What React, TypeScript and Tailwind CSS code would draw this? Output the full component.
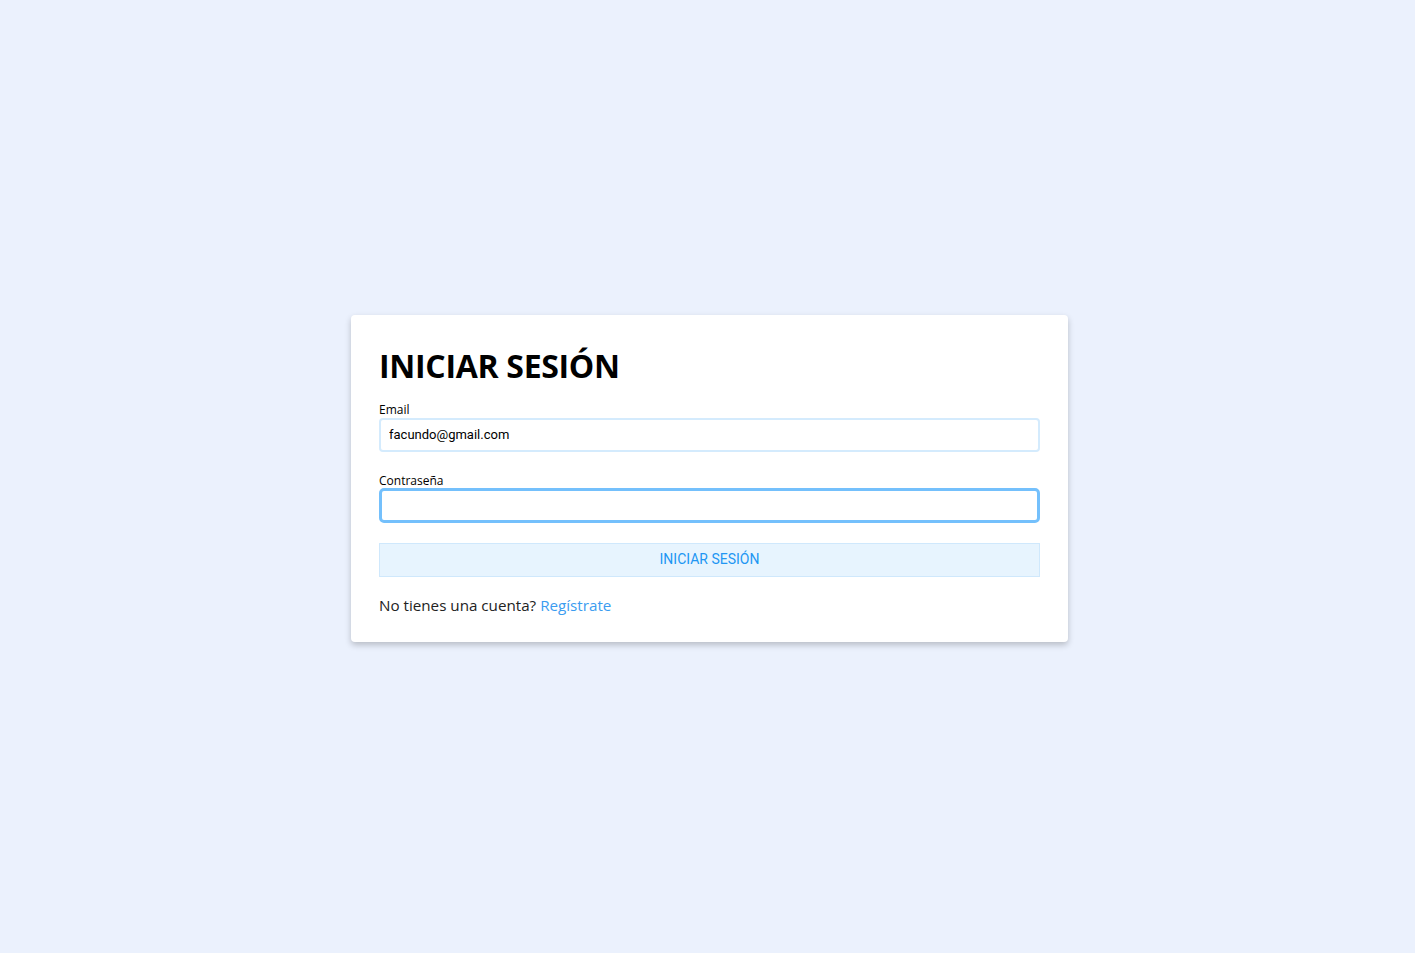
import React, { useState } from 'react';

export default function App() {
  const [email, setEmail] = useState('facundo@gmail.com');
  const [password, setPassword] = useState('');

  return (
    <div className="min-h-screen w-full flex items-center justify-center bg-[#ebf1fd]">
      <div className="ml-[4px] mt-[3px] w-[717px] bg-white rounded-[4px] shadow-[0_3px_6px_rgba(0,0,0,0.22)] px-[28px] pt-[31px] pb-[25px]">
        <h1 className="text-[32px] leading-[40px] font-bold text-black mb-[17px] font-['Open_Sans',sans-serif] tracking-[-0.3px]">
          INICIAR SESIÓN
        </h1>

        <label className="block text-[12px] leading-[14px] text-black font-['Open_Sans',sans-serif] mb-[1px]">
          Email
        </label>
        <input
          type="text"
          value={email}
          onChange={(e) => setEmail(e.target.value)}
          className="w-full h-[34px] px-[8px] border-2 border-[#d4ebfd] rounded-[4px] text-[13px] text-black font-['Roboto',sans-serif] outline-none"
        />

        <label className="block mt-[22px] text-[12px] leading-[14px] text-black font-['Open_Sans',sans-serif]">
          Contraseña
        </label>
        <input
          type="password"
          value={password}
          onChange={(e) => setPassword(e.target.value)}
          className="w-full h-[35px] px-[8px] border-[3px] border-[#74c0fc] rounded-[5px] text-[13px] text-black font-['Roboto',sans-serif] outline-none"
        />

        <button className="mt-[20px] w-full h-[34px] bg-[#e7f4fe] border border-[#cfe8fc] text-[#2196f3] text-[14px] font-['Roboto',sans-serif]">
          INICIAR SESIÓN
        </button>

        <p className="mt-[16px] text-[15.2px] leading-[24px] text-[#222] font-['Open_Sans',sans-serif]">
          No tienes una cuenta? <a href="#" className="text-[#3b9cf0]">Regístrate</a>
        </p>
      </div>
    </div>
  );
}
